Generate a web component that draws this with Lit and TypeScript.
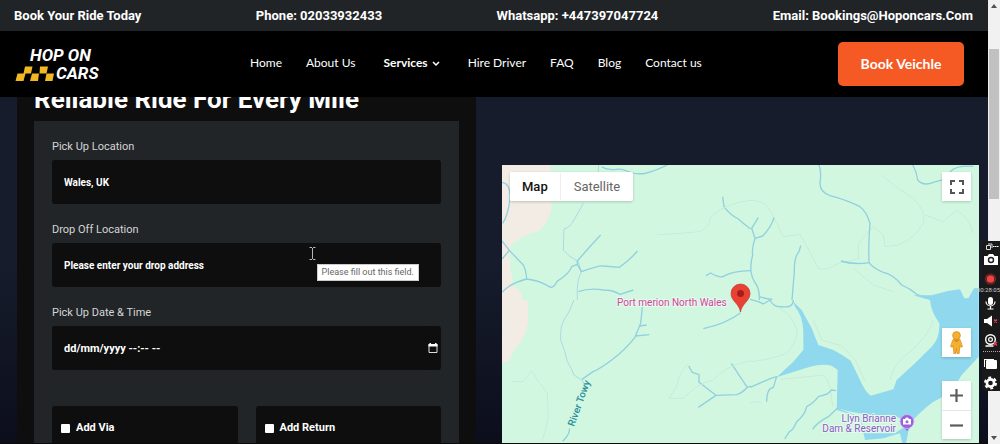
import { LitElement, html, css, svg } from "lit";
import { customElement } from "lit/decorators.js";

const NAV = ["Home", "About Us", "Services", "Hire Driver", "FAQ", "Blog", "Contact us"];
const CONTACTS = [
  ["Book Your Ride Today", "#book"],
  ["Phone: 02033932433", "tel:02033932433"],
  ["Whatsapp: +447397047724", "#whatsapp"],
  ["Email: Bookings@Hoponcars.Com", "mailto:bookings@hoponcars.com"],
];

@customElement("site-header")
class SiteHeader extends LitElement {
  static styles = css`
    :host { display: block; position: relative; z-index: 2; color: #fff; }
    a { color: inherit; text-decoration: none; white-space: nowrap; }
    .contacts {
      display: flex; justify-content: space-between; align-items: center;
      height: 31px; padding: 0 15px 0 14px; background: #212427;
      font: bold 13px/16px Roboto, sans-serif;
    }
    .bar {
      display: grid; grid-template-columns: 235px 1fr auto; align-items: center;
      height: 66px; padding: 0 24px 0 15px; background: #000;
    }
    .logo { display: grid; gap: 2px; width: 84px; font: italic bold 17px/16px Roboto, sans-serif; }
    .top { padding-left: 15px; }
    .bottom { display: flex; align-items: center; gap: 2px; }
    .checks { flex: none; width: 39px; height: 15px; }
    nav { display: flex; gap: 24px; padding-bottom: 2px; font: 12px/16px Lato, sans-serif; }
    .drop { display: inline-flex; align-items: center; gap: 4px; font-weight: bold; margin: 0 4px; }
    .drop svg { width: 8px; height: 8px; }
    button {
      width: 126px; height: 44px; border: 0; border-radius: 5px; background: #f55a25;
      color: #fff; font: bold 14px/16px Lato, sans-serif;
    }
  `;
  render() {
    return html`
      <div class="contacts">${CONTACTS.map(([t, h]) => html`<a href=${h}>${t}</a>`)}</div>
      <div class="bar">
        <a class="logo" href="#home">
          <span class="top">HOP ON</span>
          <span class="bottom">
            <svg class="checks" viewBox="0 0 39 15" aria-hidden="true" fill="#f2b824">
              <path d="M2.500 7.500h8l-2 7.500H.5zM10 .5h7.500l-1.500 7H8.500zM17 7.500h7l-1 7.500h-8zM25 .5h8l-1.500 7h-7zM31.500 7.500h7.500l-1.500 7.500H30z" />
            </svg>CARS</span>
        </a>
        <nav>
          ${NAV.map((t) => t === "Services"
            ? html`<a class="drop" href="#services">${t}<svg viewBox="0 0 8 8" fill="none" stroke="#fff" stroke-width="1.5"><path d="M1 3l3 3 3-3" /></svg></a>`
            : html`<a href="#${t}">${t}</a>`)}
        </nav>
        <button type="button">Book Veichle</button>
      </div>`;
  }
}

@customElement("booking-form")
class BookingForm extends LitElement {
  static styles = css`
    :host { display: block; background: #0e0e0e; padding: 0 17px; color: #fff; font-family: Roboto, sans-serif; }
    h1 { margin: 0; padding-bottom: 8px; font: bold 26px/28px Roboto, sans-serif; white-space: nowrap; }
    form { background: #222528; padding: 17px 18px 40px; display: grid; gap: 17px; }
    .field { display: grid; gap: 4px; position: relative; }
    label { font-size: 11px; line-height: 18px; color: #d4d5d6; }
    .box {
      box-sizing: border-box; width: 100%; height: 44px; border: 0; border-radius: 3px;
      background: #0e0e0e; color: #fff; padding: 0 12px; outline: 0;
      font: bold 10px/16px Roboto, sans-serif;
    }
    .box::placeholder { color: #fff; opacity: 1; }
    .date { display: flex; align-items: center; padding: 0 2px 0 0; }
    .date .box { flex: 1; min-width: 0; font-size: 11px; }
    .date button { border: 0; padding: 0; background: none; width: 12px; height: 12px; }
    svg { display: block; }
    .pair { display: grid; grid-template-columns: 1fr 1fr; gap: 18px; padding-top: 19px; }
    .pair label { display: flex; align-items: center; gap: 6px; padding: 0 9px; color: #fff; font-size: 11px; }
    .pair input { appearance: none; margin: 0; width: 9px; height: 9px; background: #fff; border-radius: 1px; }
    .tip {
      position: absolute; right: 22px; top: 43px; background: #fff; color: #666;
      border: 1px solid #ccc; padding: 0 4px; font: 9px/15px Roboto, sans-serif; white-space: nowrap;
    }
    .cursor { position: absolute; right: 125px; top: 26px; width: 7px; height: 13px; }
  `;
  render() {
    return html`
      <h1>Reliable Ride For Every Mile</h1>
      <form>
        <div class="field">
          <label for="pick">Pick Up Location</label>
          <input class="box" id="pick" .value=${"Wales, UK"} />
        </div>
        <div class="field">
          <label for="drop">Drop Off Location</label>
          <input class="box" id="drop" placeholder="Please enter your drop address" />
          <svg class="cursor" viewBox="0 0 7 13" fill="none" stroke="#b5b5b5"><path d="M.5 .5h2.500M4 .5h2.500M3.500 1v11M.5 12.500h2.500M4 12.500h2.500" /></svg>
          <span class="tip" role="tooltip">Please fill out this field.</span>
        </div>
        <div class="field">
          <label for="when">Pick Up Date &amp; Time</label>
          <div class="box date">
            <input class="box" id="when" placeholder="dd/mm/yyyy --:-- --" />
            <button type="button" aria-label="Open calendar">
              <svg viewBox="0 0 12 12" width="12" height="12"><path d="M2 2.500h8v8H2z" fill="none" stroke="#ddd" /><path d="M1.500 2h9v2.500h-9zM2.500 1h1.500v1H2.500zM8 1h1.500v1H8z" fill="#fff" /></svg>
            </button>
          </div>
        </div>
        <div class="pair">
          <label class="box"><input type="checkbox" />Add Via</label>
          <label class="box"><input type="checkbox" />Add Return</label>
        </div>
      </form>`;
  }
}

/* Four map sheets, drawn at three units to the pixel. */
const land = svg`
  <g transform="translate(-12 -10) scale(.33333)">
    <path class="sand" d="M36 30H182V140Q190 160 172 195Q160 220 140 230Q100 238 65 268L58 290Q60 350 72 395Q95 405 98 435H36Z" />
    <path class="thin" d="M326 30L322 80M280 145L252 195Q240 218 222 222L220 285Q235 305 265 320L274 350Q258 380 262 435" />
    <path class="stream" d="M335 36C370 55 385 32 410 48C450 65 480 55 532 30M36 82Q62 85 60 130Q55 180 38 205M36 258L58 286L36 312M58 286Q85 315 100 330Q108 345 110 372M36 412Q60 385 110 372Q145 375 182 397Q195 395 200 380Q240 355 245 335L262 328L262 318Q290 285 332 240M262 328L274 350Q330 330 340 333L388 337Q425 310 442 288M265 410Q300 398 340 405Q370 405 390 418L430 405M698 125L702 155Q720 180 745 192Q765 210 782 222M648 362L662 354Q690 370 700 364Q730 348 782 347" />
    <path class="trail" d="M500 240L630 230Q660 215 660 190Q700 145 780 136" />
  </g>
  <g transform="translate(248 -10) scale(.33333)">
    <path class="trail" d="M0 136Q50 135 65 175L100 245L150 238Q180 290 205 340Q230 350 265 325L330 310M395 60Q440 100 490 130Q530 170 520 205Q480 275 405 275L400 240L370 215L325 265V310M525 180L580 200L620 165Q660 190 670 235M310 340L370 390L430 410" />
    <path class="stream" d="M207 30Q215 50 210 85Q210 112 240 122Q290 135 330 155Q350 170 360 205Q355 260 357 323Q370 340 400 352Q430 358 455 390Q480 400 500 418L530 430M273 318Q310 330 357 323M488 30Q500 50 503 75Q520 95 550 82L580 74M600 50Q620 30 670 34M25 188L5 220L15 250Q5 280 8 300Q-5 345 12 378Q30 400 28 435M15 250L38 243Q65 215 72 188M152 272L147 290Q132 305 133 350L126 435M28 425Q50 432 68 433" />
  </g>
  <g transform="translate(-12 135) scale(.33333)">
    <path class="sand" d="M36 0H112L115 65Q105 120 75 145L55 185H36Z" />
    <path class="thin" d="M252 0Q240 35 222 60Q210 80 212 120Q225 150 232 185Q245 205 252 225L278 242L287 265" />
    <path class="stream" d="M458 10L452 70L435 112Q405 150 365 180Q325 210 310 214L276 238M450 78L470 75M437 108L478 104M640 86Q710 70 752 38M596 198L607 217L627 224V247L678 286L625 322M678 286L740 284Q755 280 772 262L782 258M724 190L750 230L772 262" />
    <path class="stream" d="M238 385Q242 400 218 424" />
    <path class="trail" d="M65 245L100 245L125 212L150 250L172 280L175 350Q165 400 155 425M595 190Q565 220 560 260L537 295L580 295Q620 250 670 240Q700 200 780 182" />
  </g>
  <g transform="translate(248 135) scale(.33333)">
    <path class="water" d="M686 -35H672L655 -5L643 -5L630 -32Q600 -30 545 -14L490 -14L530 -3L540 0Q543 35 568 70Q570 115 545 140L495 190L440 240L430 268L362 287Q345 275 330 240L302 182Q270 160 250 150L205 135L185 85L155 30L130 5L135 20Q158 45 160 95V150L130 185L80 232L180 200Q220 190 245 197L263 210L260 330L330 350L345 420L400 415L450 400L457 430H468L480 370Q510 335 550 305Q600 285 635 225L686 170Z" />
    <path class="green" d="M263 325L330 350L345 400L435 400L480 370L430 345Q340 350 263 325Z" />
    <path class="trail" d="M0 185Q60 180 110 160Q140 130 142 95Q130 50 90 25M190 60L215 120L275 138L315 178L345 245M90 238Q180 230 220 225Q240 235 248 320M550 60Q535 110 480 155Q430 190 420 240M0 310Q20 300 35 310" />
    <path class="stream" d="M0 -2Q30 5 40 12L60 0Q70 22 95 20Q130 25 130 0M0 262L40 245Q60 235 80 230L70 262Q50 265 50 305M258 272L245 270L232 282L205 290Q190 310 170 320Q165 345 140 365Q130 390 118 395L104 417M262 325L235 350Q200 368 188 388" />
  </g>`;

@customElement("route-map")
class RouteMap extends LitElement {
  static styles = css`
    :host { display: block; position: relative; overflow: hidden; background: #d2f7e1; height: 300px; font-family: Roboto, sans-serif; }
    .land { position: absolute; inset: 0; width: 100%; height: 278px; }
    .sand { fill: #f2ece4; }
    .green { fill: #d2f7e1; }
    .water { fill: #8fd8ee; }
    .stream, .thin, .trail { fill: none; stroke: #91d0de; stroke-width: 4; stroke-linejoin: round; }
    .thin { stroke-width: 3; stroke: #a9dbe0; }
    .trail { stroke: #c6ebda; stroke-width: 3; }
    .label { font: 10px Roboto, sans-serif; paint-order: stroke; stroke: #e6faee; stroke-width: 2px; }
    .place { fill: #d0479c; }
    .river { fill: #2b8f9b; stroke: none; font-weight: 500; }
    .lake { fill: #8b5dc5; text-anchor: end; }
    .types { position: absolute; left: 8px; top: 7px; display: flex; background: #fff; border-radius: 2px; box-shadow: 0 1px 3px #0003; }
    button { border: 0; background: #fff; padding: 0; height: 29px; color: #666; font: 13px/16px Roboto, sans-serif; }
    .types button { padding: 0 13px; border-radius: 2px; }
    .types .on { padding: 0 12px; color: #111; font-weight: 500; border-right: 1px solid #eee; }
    .stack { position: absolute; right: 8px; width: 29px; display: grid; box-shadow: 0 1px 3px #0003; background: #fff; border-radius: 1px; }
    .full { top: 7px; }
    .peg { top: 163px; }
    .zoom { top: 216px; }
    .stack button { display: grid; place-items: center; }
    .stack button + button { border-top: 1px solid #e6e6e6; }
  `;
  render() {
    return html`
      <svg class="land" viewBox="0 0 477 278" preserveAspectRatio="xMinYMin slice" role="img" aria-label="Map of Llyn Brianne">
        ${land}
        <text class="label place" x="115" y="141">Port merion North Wales</text>
        <text class="label river" transform="translate(72 262) rotate(-70)">River Towy</text>
        <text class="label lake" x="394" y="257">Llyn Brianne</text>
        <text class="label lake" x="394" y="267">Dam &amp; Reservoir</text>
        <path d="M238.500 147c-1-8-9.500-11-9.500-18.500a9.500 9.500 0 0 1 19 0c0 7.500-8.500 10.500-9.500 18.500z" fill="#e94235" stroke="#c5352b" stroke-width=".7" />
        <circle cx="238.500" cy="128.500" r="3.500" fill="#a51d1a" />
        <path d="M405 266l-4.500-5h9z" fill="#9a62dc" />
        <circle cx="405" cy="256.500" r="7" fill="#9a62dc" stroke="#d9c0f5" stroke-width=".8" />
        <path d="M401 254h2l1-1.500h2l1 1.500h2v5.500h-8z" fill="#fff" /><circle cx="405" cy="256.700" r="1.500" fill="#9a62dc" />
      </svg>
      <div class="types"><button class="on" type="button">Map</button><button type="button">Satellite</button></div>
      <div class="stack full"><button type="button" aria-label="Full screen">
        <svg width="14" height="14" viewBox="0 0 14 14" fill="none" stroke="#555" stroke-width="2"><path d="M1 5V1h4M9 1h4v4M13 9v4H9M5 13H1V9" /></svg></button></div>
      <div class="stack peg"><button type="button" aria-label="Street view">
        <svg width="13" height="23" viewBox="0 0 13 23" fill="#f5b02e" stroke="#d88b1b" stroke-width=".7"><path d="M3 8.500h7l2.500 7-1.800.8-.9-1.500-.6 7.700H7.100l-.6-5-.6 5H3.800l-.6-7.700-.9 1.500-1.800-.8z" /><circle cx="6.500" cy="4.500" r="3.900" /><path d="M4 9l2.500 2L9 9" fill="#d88b1b" /></svg></button></div>
      <div class="stack zoom">
        <button type="button" aria-label="Zoom in"><svg width="13" height="13" viewBox="0 0 13 13" stroke="#5c5c5c" stroke-width="2.200"><path d="M0 6.500h13M6.500 0v13" /></svg></button>
        <button type="button" aria-label="Zoom out"><svg width="13" height="13" viewBox="0 0 13 13" stroke="#5c5c5c" stroke-width="2.200"><path d="M0 6.500h13" /></svg></button>
      </div>`;
  }
}

@customElement("screen-recorder")
class ScreenRecorder extends LitElement {
  static styles = css`
    :host {
      position: absolute; right: 0; top: 241px; z-index: 4; width: 18px; height: 150px;
      background: #191919; border-radius: 4px 0 0 4px; color: #fff;
    }
    svg { display: block; }
    .time { position: absolute; right: 0; top: 45px; font: 6px/8px Roboto, sans-serif; color: #ccc; }
  `;
  render() {
    return html`
      <svg width="18" height="150" viewBox="0 0 18 150" fill="#fff" aria-hidden="true">
        <path d="M4.500 4.500h4v4h-4zM6 3h4v4" fill="none" stroke="#ddd" />
        <path d="M11 5h1.500v1H11zM13 5h1.500v1H13zM15 5h1.500v1H15z" />
        <path d="M2 15h3.500l1.500-2h4l1.500 2H16v9H2z" /><circle cx="9" cy="19" r="2.500" fill="none" stroke="#222" stroke-width="1.400" />
        <circle cx="8.500" cy="38" r="5" fill="none" stroke="#83252a" stroke-width="1.200" /><circle cx="8.500" cy="38" r="3.800" fill="#f04444" />
        <rect x="6" y="56" width="5" height="8" rx="2.500" /><path d="M4 60.500a4.500 4.500 0 0 0 9 0M8.500 65v3M5.500 68h6" fill="none" stroke="#fff" stroke-width="1.200" />
        <path d="M2 78h3l5-3.500v11L5 82H2z" /><path d="M12 78.500l3 3m0-3l-3 3" stroke="#e43e58" stroke-width="1.400" />
        <circle cx="8.500" cy="98.500" r="4.800" fill="none" stroke="#fff" stroke-width="1.400" /><circle cx="8.500" cy="98.500" r="1.900" fill="none" stroke="#fff" stroke-width="1.200" />
        <path d="M3.500 105h8" stroke="#fff" stroke-width="1.500" /><path d="M11.500 101l3.500 3.500m0-3.500l-3.500 3.500" stroke="#e43e58" stroke-width="1.300" />
        <path d="M1 110.500h17" stroke="#aaa" stroke-dasharray="1 1" />
        <path d="M2 118h10v1H3v7H2z" /><rect x="4" y="119" width="11" height="9" rx="1" />
        <circle cx="8.500" cy="142" r="3.600" fill="none" stroke="#fff" stroke-width="2.600" />
        <circle cx="8.500" cy="142" r="5.500" fill="none" stroke="#fff" stroke-width="2" stroke-dasharray="2.880 2.880" />
      </svg>
      <span class="time">00:28:05</span>`;
  }
}

@customElement("app-root")
class AppRoot extends LitElement {
  static styles = css`
    :host { display: grid; grid-template-columns: minmax(0, 1fr) 12px; position: relative; height: 100vh; overflow: hidden; background: #161c2c; }
    .page { height: 100vh; overflow: hidden; box-sizing: border-box; border-bottom: 1px solid #0a0a0a; }
    main {
      display: grid; grid-template-columns: 459fr 477fr; column-gap: 26px; align-items: start;
      padding: 0 9px 0 17px; margin-top: -16px;
      background: linear-gradient(#161c2c 0, #161c2c 45%, #0b0d1b 90%);
    }
    booking-form { padding-top: 4px; }
    route-map { margin-top: 84px; }
    .track { display: grid; grid-template-rows: 49px 150px 1fr; background: #f1f1f1; justify-items: center; }
    .thumb { width: 10px; background: #c1c1c1; }
    .up { padding-top: 4px; }
    .down { align-self: end; padding-bottom: 4px; }
    .track svg { display: block; width: 6px; height: 4px; fill: #505050; }
  `;
  render() {
    return html`
      <div class="page">
        <site-header></site-header>
        <main><booking-form></booking-form><route-map></route-map></main>
      </div>
      <div class="track" aria-hidden="true">
        <div class="up"><svg viewBox="0 0 6 4"><path d="M0 4l3-4 3 4z" /></svg></div>
        <div class="thumb"></div>
        <div class="down"><svg viewBox="0 0 6 4"><path d="M0 0l3 4 3-4z" /></svg></div>
      </div>
      <screen-recorder></screen-recorder>`;
  }
}
